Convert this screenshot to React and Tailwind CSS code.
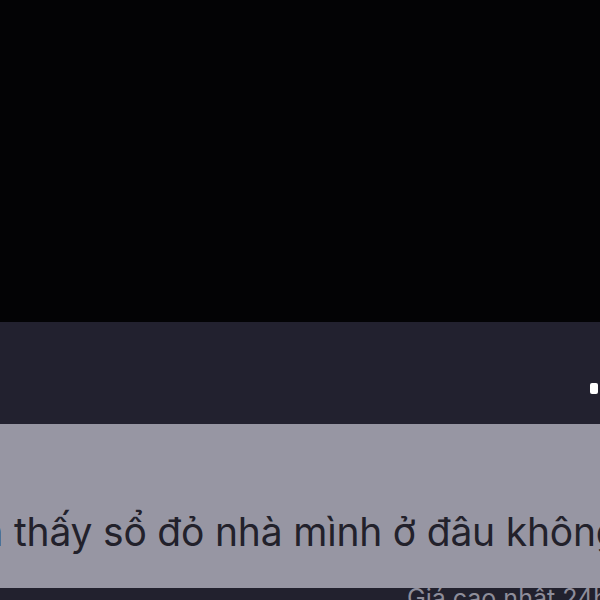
export default function App() {
  return (
    <div className="flex h-[600px] w-[600px] flex-col overflow-hidden bg-black font-['Inter','Liberation_Sans',sans-serif]">
      {/* video area */}
      <div className="h-[322px] shrink-0 bg-[#030305]" />

      {/* caption bar */}
      <div className="flex h-[102px] shrink-0 items-center justify-end bg-[#22212f] pt-[30px]">
        <div className="mr-[2px] h-[11px] w-[8px] rounded-[2px] bg-white" />
      </div>

      {/* message bubble */}
      <div className="flex h-[164px] shrink-0 items-end overflow-hidden bg-[#9796a3] pb-[37px]">
        <p className="flex items-baseline whitespace-nowrap text-[39px] leading-none tracking-[-0.2px] text-[#22212b]">
          <span className="flex w-[3px] shrink-0 justify-end">
            <span className="shrink-0">Có ai nhìn</span>
          </span>
          <span className="ml-[11px]">thấy sổ đỏ nhà mình ở đâu không?</span>
        </p>
      </div>

      {/* footer */}
      <div className="flex h-[12px] shrink-0 overflow-hidden bg-[#22212e] pl-[407px]">
        <span className="mt-[-2px] whitespace-nowrap text-[25px] leading-none text-[#8e8d9a]">
          Giá cao nhất 24h
        </span>
      </div>
    </div>
  );
}
